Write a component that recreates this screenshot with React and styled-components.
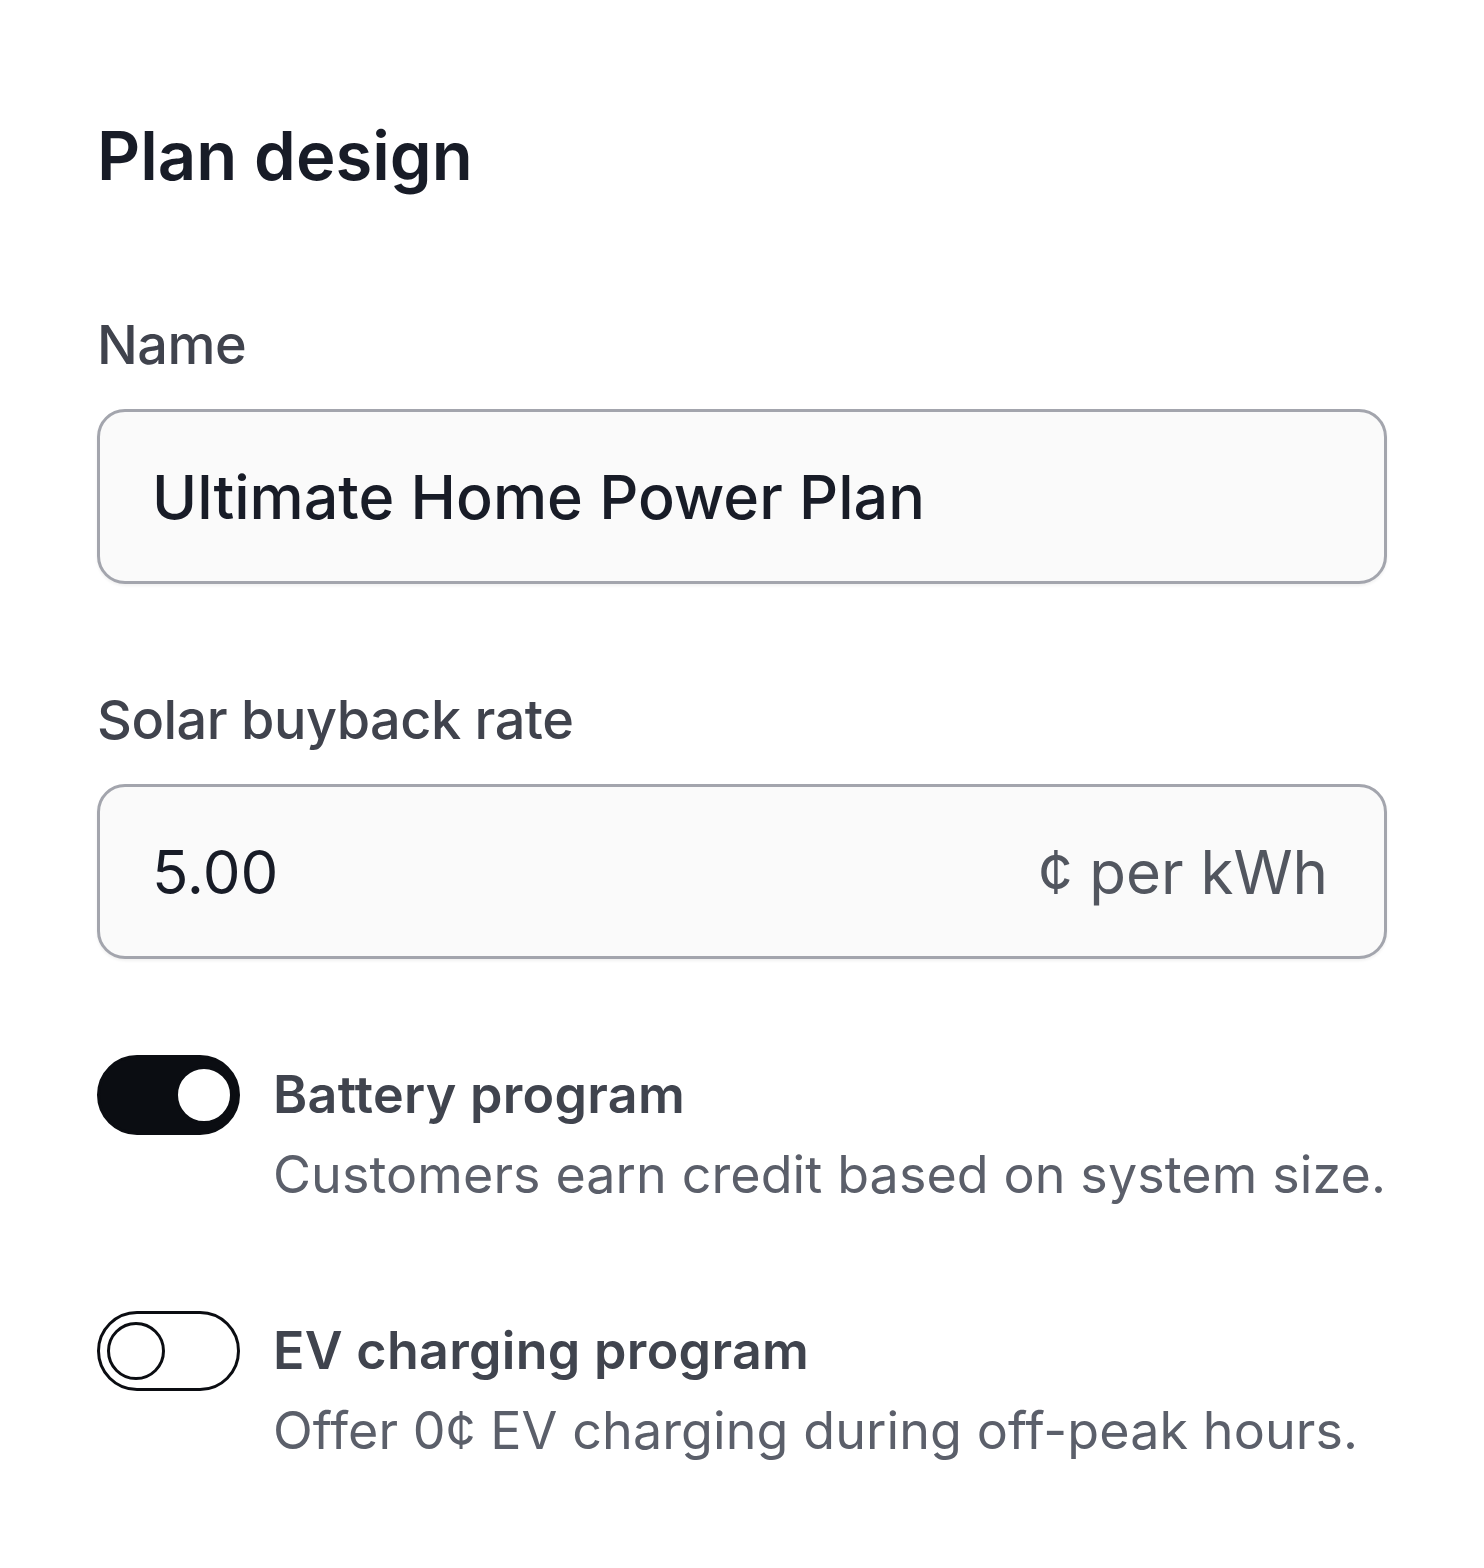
import styled, { createGlobalStyle } from 'styled-components';

const GlobalStyle = createGlobalStyle`
  html, body {
    margin: 0;
    padding: 0;
    background: #ffffff;
  }
  body {
    font-family: Inter, "Noto Sans", "Liberation Sans", sans-serif;
    -webkit-font-smoothing: antialiased;
  }
`;

const Page = styled.div`
  display: flex;
  flex-direction: column;
  padding: 116px 97px 80px;
  box-sizing: border-box;
  width: 1484px;
`;

const Heading = styled.h1`
  margin: 0 0 117px;
  font-size: 67px;
  line-height: 80px;
  font-weight: 600;
  color: #181c27;
`;

const Field = styled.div`
  display: flex;
  flex-direction: column;
  gap: 32px;
  margin-bottom: ${(p) => p.$mb || 0}px;
`;

const Label = styled.label`
  font-size: 54px;
  line-height: 64px;
  font-weight: 500;
  color: #40434d;
  letter-spacing: -0.5px;
`;

const InputBox = styled.div`
  display: flex;
  align-items: center;
  justify-content: space-between;
  height: 175px;
  box-sizing: border-box;
  padding: 0 56px 0 52px;
  border: 3px solid #a3a5ad;
  border-radius: 28px;
  background: #fafafa;
  box-shadow: 0 2px 3px rgba(0, 0, 0, 0.06);
`;

const Value = styled.span`
  font-size: ${(p) => p.$size || 60}px;
  line-height: 80px;
  font-weight: ${(p) => p.$weight || 400};
  color: #181c27;
`;

const Unit = styled.span`
  font-size: 60px;
  line-height: 80px;
  font-weight: 400;
  color: #52565f;
`;

const ToggleRow = styled.div`
  display: flex;
  align-items: flex-start;
  gap: 33px;
  margin-bottom: ${(p) => p.$mb || 0}px;
`;

const Track = styled.div`
  flex: none;
  display: flex;
  align-items: center;
  justify-content: ${(p) => (p.$on ? 'flex-end' : 'flex-start')};
  width: 143px;
  height: 80px;
  box-sizing: border-box;
  padding: 0 ${(p) => (p.$on ? 4 : 7)}px;
  border: 3px solid #0b0d12;
  border-radius: 40px;
  background: ${(p) => (p.$on ? '#0b0d12' : '#ffffff')};
`;

const Knob = styled.div`
  width: 58px;
  height: 58px;
  box-sizing: border-box;
  border-radius: 50%;
  border: 3px solid #0b0d12;
  background: #ffffff;
`;

const ToggleText = styled.div`
  display: flex;
  flex-direction: column;
`;

const ToggleTitle = styled.div`
  font-size: 52px;
  line-height: 80px;
  font-weight: 600;
  color: #40444e;
  letter-spacing: 0.3px;
`;

const ToggleDesc = styled.div`
  font-size: 52px;
  line-height: 80px;
  font-weight: 400;
  color: #5b5f6a;
  letter-spacing: 0.1px;
`;

const Toggle = ({ on }) => (
  <Track $on={on}>
    <Knob />
  </Track>
);

export default function App() {
  return (
    <>
      <GlobalStyle />
      <Page>
        <Heading>Plan design</Heading>
        <Field $mb={104}>
          <Label>Name</Label>
          <InputBox>
            <Value $weight={500} $size={61}>Ultimate Home Power Plan</Value>
          </InputBox>
        </Field>
        <Field $mb={96}>
          <Label>Solar buyback rate</Label>
          <InputBox>
            <Value>5.00</Value>
            <Unit>¢ per kWh</Unit>
          </InputBox>
        </Field>
        <ToggleRow $mb={96}>
          <Toggle on />
          <ToggleText>
            <ToggleTitle>Battery program</ToggleTitle>
            <ToggleDesc>Customers earn credit based on system size.</ToggleDesc>
          </ToggleText>
        </ToggleRow>
        <ToggleRow>
          <Toggle />
          <ToggleText>
            <ToggleTitle>EV charging program</ToggleTitle>
            <ToggleDesc>Offer 0¢ EV charging during off-peak hours.</ToggleDesc>
          </ToggleText>
        </ToggleRow>
      </Page>
    </>
  );
}
